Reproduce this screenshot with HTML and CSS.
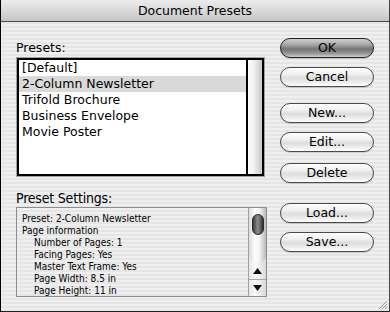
FILE: index.html
```html
<!DOCTYPE html>
<html lang="en">
<head>
    <meta charset="UTF-8">
    <title>Document Presets</title>
    <link rel="stylesheet" href="styles.css">
</head>
<body>
    <div class="window">
        <div class="titlebar">Document Presets</div>

        <div class="content">
            <div class="left">
                <div class="label">Presets:</div>
                <div class="listbox">
                    <div class="items">
                        <div class="item">[Default]</div>
                        <div class="item selected">2-Column Newsletter</div>
                        <div class="item">Trifold Brochure</div>
                        <div class="item">Business Envelope</div>
                        <div class="item">Movie Poster</div>
                    </div>
                    <div class="listscroll"></div>
                </div>

                <div class="label big">Preset Settings:</div>
                <div class="settings">
                    <div class="lines">
                        <div>Preset: 2-Column Newsletter</div>
                        <div>Page information</div>
                        <div class="ind">Number of Pages: 1</div>
                        <div class="ind">Facing Pages: Yes</div>
                        <div class="ind">Master Text Frame: Yes</div>
                        <div class="ind">Page Width: 8.5 in</div>
                        <div class="ind">Page Height: 11 in</div>
                    </div>
                    <div class="vscroll">
                        <div class="track">
                            <div class="thumb"></div>
                        </div>
                        <div class="arrow">
                            <svg width="9" height="6" viewBox="0 0 9 6"><path d="M4.5 0 L9 6 L0 6 Z" fill="#111"/></svg>
                        </div>
                        <div class="arrow down">
                            <svg width="9" height="6" viewBox="0 0 9 6"><path d="M0 0 L9 0 L4.5 6 Z" fill="#111"/></svg>
                        </div>
                    </div>
                </div>
            </div>

            <div class="buttons">
                <button class="btn default">OK</button>
                <button class="btn b-cancel">Cancel</button>
                <button class="btn b-new">New...</button>
                <button class="btn b-edit">Edit...</button>
                <button class="btn b-delete">Delete</button>
                <button class="btn b-load">Load...</button>
                <button class="btn b-save">Save...</button>
            </div>
        </div>

        <!-- resize grip -->
        <svg class="grip" width="11" height="11" viewBox="0 0 11 11">
            <path d="M10 2 L2 10 M10 5 L5 10 M10 8 L8 10" stroke="#9a9a9a" stroke-width="1"/>
        </svg>
    </div>
</body>
</html>
```

FILE: styles.css
```css
body {
    margin: 0;
    font-family: "DejaVu Sans", "Liberation Sans", sans-serif;
    color: #000;
}

div.window {
    position: relative;
    width: 390px;
    height: 312px;
    box-sizing: border-box;
    border-left: 1px solid #000;
    border-right: 1px solid #444;
    border-bottom: 1px solid #222;
    background: repeating-linear-gradient(to bottom, #efefef 0, #efefef 2px, #e5e5e5 2px, #e5e5e5 4px);
}

div.titlebar {
    height: 21px;
    line-height: 21px;
    text-align: center;
    font-size: 12.5px;
    background: linear-gradient(to bottom, #ececec, #d6d6d6 60%, #c4c4c4);
    border-bottom: 1px solid #4a4a4a;
}

div.content {
    display: flex;
    padding-left: 15px;
}

div.left {
    width: 251px;
}

div.label {
    margin-top: 18px;
    font-size: 12.5px;
    line-height: 16px;
    height: 16px;
}

div.label.big {
    margin-top: 12px;
    font-family: "DejaVu Sans Condensed", "DejaVu Sans", sans-serif;
    font-stretch: condensed;
    font-size: 14px;
    letter-spacing: -0.2px;
    line-height: 18px;
    height: 18px;
}

/* presets list */
div.listbox {
    margin-top: 1px;
    height: 120px;
    width: 249px;
    box-sizing: border-box;
    border: 1px solid #a0a0a0;
    display: flex;
}
div.listbox div.items {
    flex: 1;
    background: #fff;
    border: 2px solid #000;
}
div.listbox div.item {
    height: 16px;
    line-height: 16px;
    padding-left: 3px;
    font-size: 12.5px;
    white-space: nowrap;
}
div.listbox div.item.selected {
    background: #d9d9d9;
}
div.listscroll {
    width: 14px;
    border-top: 2px solid #000;
    border-right: 2px solid #000;
    border-bottom: 2px solid #000;
    background: linear-gradient(to right, #fdfdfd, #f2f2f2 40%, #c8c8c8);
}

/* preset settings */
div.settings {
    height: 90px;
    box-sizing: border-box;
    border: 1px solid #8c8c8c;
    display: flex;
}
div.settings div.lines {
    flex: 1;
    padding: 5px 0 0 5px;
    font-family: "DejaVu Sans Condensed", "DejaVu Sans", sans-serif;
    font-stretch: condensed;
    font-size: 10px;
    line-height: 12px;
    white-space: nowrap;
    overflow: hidden;
}
div.settings div.ind {
    padding-left: 12px;
}
div.vscroll {
    width: 17px;
    border-left: 1px solid #a0a0a0;
    display: flex;
    flex-direction: column;
    background: linear-gradient(to right, #e8e8e8, #fafafa 40%, #d8d8d8);
}
div.vscroll div.track {
    height: 55px;
    border-bottom-left-radius: 8px;
    border-bottom-right-radius: 8px;
    background: linear-gradient(to right, #dadada, #ffffff 35%, #f4f4f4 60%, #b8b8b8);
    padding-top: 6px;
    box-sizing: border-box;
}
div.vscroll div.thumb {
    width: 12px;
    height: 21px;
    margin: 0 auto;
    border-radius: 6px;
    border: 1px solid #2a2a2a;
    box-sizing: border-box;
    background: linear-gradient(to right, #3a3a3a, #8a8a8a 45%, #6a6a6a 70%, #2e2e2e);
}
div.vscroll div.arrow {
    height: 16px;
    display: flex;
    align-items: center;
    justify-content: center;
}
div.vscroll div.arrow.down {
    border-top: 1px solid #a8a8a8;
}

/* buttons */
div.buttons {
    margin-left: 13px;
    width: 94px;
    padding-top: 16px;
    display: flex;
    flex-direction: column;
}
button.btn {
    width: 94px;
    height: 20px;
    padding: 0;
    border: 1px solid #4a4a4a;
    border-radius: 10px;
    font-family: "DejaVu Sans", "Liberation Sans", sans-serif;
    font-size: 12.5px;
    line-height: 18px;
    color: #000;
    background: linear-gradient(to bottom, #fdfdfd 0%, #f0f0f0 35%, #dcdcdc 55%, #eeeeee 80%, #ffffff 100%);
    box-shadow: 0 1px 1px rgba(0,0,0,0.15);
}
button.btn.default {
    border-color: #222;
    background: linear-gradient(to bottom, #d0d0d0 0%, #a0a0a0 35%, #747474 55%, #959595 80%, #cfcfcf 100%);
}
button.b-cancel { margin-top: 9px; }
button.b-new { margin-top: 16px; }
button.b-edit { margin-top: 9px; }
button.b-delete { margin-top: 11px; }
button.b-load { margin-top: 20px; }
button.b-save { margin-top: 9px; }

svg.grip {
    position: absolute;
    right: 1px;
    bottom: 1px;
}
```
